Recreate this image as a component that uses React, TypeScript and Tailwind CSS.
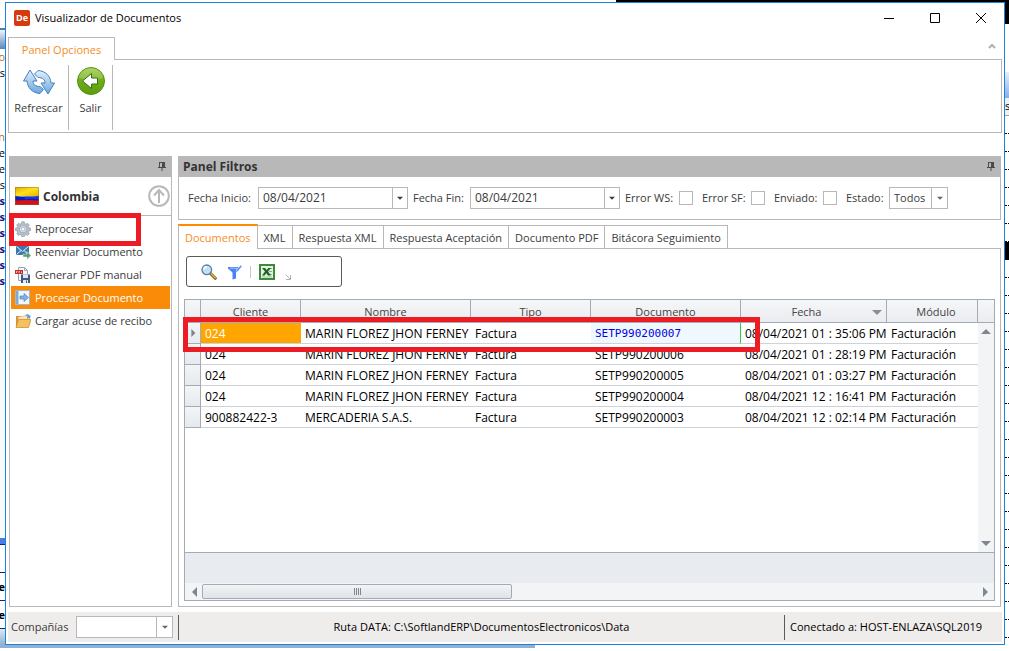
import type { ReactNode } from "react";

interface DocRow {
  cliente: string;
  nombre: string;
  tipo: string;
  documento: string;
  fecha: string;
  modulo: string;
}

const MARIN = "MARIN FLOREZ JHON FERNEY";

const ROWS: DocRow[] = [
  { cliente: "024", nombre: MARIN, tipo: "Factura", documento: "SETP990200007", fecha: "08/04/2021 01 : 35:06 PM", modulo: "Facturación" },
  { cliente: "024", nombre: MARIN, tipo: "Factura", documento: "SETP990200006", fecha: "08/04/2021 01 : 28:19 PM", modulo: "Facturación" },
  { cliente: "024", nombre: MARIN, tipo: "Factura", documento: "SETP990200005", fecha: "08/04/2021 01 : 03:27 PM", modulo: "Facturación" },
  { cliente: "024", nombre: MARIN, tipo: "Factura", documento: "SETP990200004", fecha: "08/04/2021 12 : 16:41 PM", modulo: "Facturación" },
  { cliente: "900882422-3", nombre: "MERCADERIA S.A.S.", tipo: "Factura", documento: "SETP990200003", fecha: "08/04/2021 12 : 02:14 PM", modulo: "Facturación" },
];

const TABS = ["Documentos", "XML", "Respuesta XML", "Respuesta Aceptación", "Documento PDF", "Bitácora Seguimiento"];

/* ---------- icons ---------- */

function Triangle({ dir, className }: { dir: "up" | "down" | "left" | "right"; className?: string }) {
  const d = { up: "M0 7L5 2l5 5z", down: "M0 3l5 5 5-5z", left: "M8 0L3 5l5 5z", right: "M3 0l5 5-5 5z" }[dir];
  return (
    <svg viewBox="0 0 10 10" className={className ?? "size-2.5"} fill="currentColor" aria-hidden="true">
      <path d={d} />
    </svg>
  );
}

function RefreshIcon() {
  return (
    <svg viewBox="0 0 32 26" className="h-[26px] w-8" aria-hidden="true">
      <defs>
        <linearGradient id="refresh" x1="0" y1="0" x2="0" y2="1">
          <stop offset="0" stopColor="#e3f1fc" />
          <stop offset="1" stopColor="#6aa6de" />
        </linearGradient>
      </defs>
      <g fill="url(#refresh)" stroke="#4580b8" strokeWidth="1" strokeLinejoin="round">
        <path d="M7 1L0.5 12H4C4.500 18.500 9 24 17 24.500L20.500 20.500L17 17.500C12.500 17.500 10 15.500 10 12H14Z" />
        <path d="M25 25L31.500 14H28C27.500 7.500 23 2 15 1.500L11.500 5L15 8.500C19.500 8.500 22 10.500 22 14H18Z" />
      </g>
    </svg>
  );
}

function ExitIcon() {
  return (
    <svg viewBox="0 0 28 28" className="size-7" aria-hidden="true">
      <defs>
        <linearGradient id="exit" x1="0" y1="0" x2="0" y2="1">
          <stop offset="0" stopColor="#9dcb3f" />
          <stop offset="0.5" stopColor="#6dac1a" />
          <stop offset="1" stopColor="#5a9f0a" />
        </linearGradient>
      </defs>
      <circle cx="14" cy="14" r="13.500" fill="url(#exit)" stroke="#55901a" />
      <path d="M2 11a12 10 0 0 1 24 0q-12 4-24 0z" fill="#fff" opacity="0.18" />
      <path d="M5.500 14L14.500 6.500V11H20.500V17H14.500V21.500Z" fill="#fff" stroke="#3c6e10" />
    </svg>
  );
}

function PinIcon() {
  return (
    <svg viewBox="0 0 8 9" className="h-[9px] w-2" fill="#4a4a4a" aria-hidden="true">
      <path d="M1 0h6v5h1v1H4.500v3h-1V6H0V5h1zM2 1v4h2V1z" fillRule="evenodd" />
    </svg>
  );
}

function FlagIcon() {
  return (
    <svg viewBox="0 0 24 18" className="h-[18px] w-6" aria-hidden="true">
      <defs>
        <linearGradient id="flag" x1="0" y1="0" x2="1" y2="1">
          <stop offset="0" stopColor="#e0a800" />
          <stop offset="0.5" stopColor="#ffe11a" />
          <stop offset="1" stopColor="#e9b400" />
        </linearGradient>
      </defs>
      <path d="M0 0h24v9H0z" fill="url(#flag)" />
      <path d="M0 9q12 1 24 0v5H0z" fill="#0b1fae" />
      <path d="M0 13.500q12-1 24 0V18H0z" fill="#d3121c" />
      <path d="M10 9.500h14v3q-8-1.500-14 0z" fill="#2443dd" opacity="0.7" />
      <path d="M.5.500h23v17H.5z" fill="none" stroke="#8a6a2a" opacity="0.45" />
    </svg>
  );
}

function GearIcon() {
  return (
    <svg viewBox="0 0 16 16" className="size-4" aria-hidden="true">
      <g fill="#b5bfca" stroke="#8492a1" strokeWidth="0.6">
        <path d="M6.700.800h2.600l.4 1.900 1.200.5 1.600-1 1.800 1.800-1 1.600.5 1.200 1.900.4v2.300l-1.900.4-.5 1.200 1 1.600-1.800 1.800-1.600-1-1.200.5-.4 1.500H6.700l-.4-1.500-1.200-.5-1.600 1-1.800-1.800 1-1.600-.5-1.200L.4 9.500V7.200L2.200 6.800l.5-1.200-1-1.600 1.800-1.800 1.600 1 1.200-.5z" />
        <circle cx="8" cy="8.200" r="3.600" fill="#e4e9ee" />
        <circle cx="8" cy="8.200" r="1.800" fill="#fff" />
      </g>
    </svg>
  );
}

function MailIcon() {
  return (
    <svg viewBox="0 0 16 16" className="size-4" aria-hidden="true">
      <path d="M1 2h13v9H1z" fill="#3b78ad" />
      <path d="M1.500 2.500l6 5 6-5M1.500 10.500L6 6.500M13.500 10.500L9 6.500" fill="none" stroke="#e6f1fa" />
      <path d="M8 10h4V7.500l4 4-4 4V13H8z" fill="#5d9c78" stroke="#e8f3ec" strokeWidth="0.5" />
    </svg>
  );
}

function PdfIcon() {
  return (
    <svg viewBox="0 0 16 16" className="size-4" aria-hidden="true">
      <path d="M3.500.500h6l3 3v10h-9z" fill="#f7f9fc" stroke="#9aa5b5" />
      <path d="M9.500.500v3h3" fill="none" stroke="#9aa5b5" />
      <path d="M0 3h8v4H0z" fill="#cc2b24" />
      <path d="M1.500 6V4.500h1M4 6V4.500h1M6.500 6V4.500" fill="none" stroke="#fff" strokeWidth="0.7" />
      <path d="M6 7.500h9V16H6z" fill="#44597f" />
      <path d="M8 7.500h5V11H8zM8 13h5v3H8z" fill="#dfe8f4" />
      <path d="M11 13.500h1V16h-1z" fill="#44597f" />
    </svg>
  );
}

function ProcessIcon() {
  return (
    <svg viewBox="0 0 16 16" className="size-4" aria-hidden="true">
      <path d="M.5.500h14v14H.5z" fill="#f2f6fa" stroke="#9db9d3" />
      <path d="M1 1h2.500v13H1z" fill="#7eaad6" />
      <path d="M5 6h4V3.500L13.500 7.500 9 11.500V9H5z" fill="#7fb2e2" stroke="#4f88bd" strokeWidth="0.700" />
    </svg>
  );
}

function FolderIcon() {
  return (
    <svg viewBox="0 0 16 16" className="size-4" aria-hidden="true">
      <path d="M1 3h5l1 1.500h6V14H1z" fill="#d99433" />
      <path d="M3 4l9-1.500 1 7H3z" fill="#f8e6b8" stroke="#d1a552" strokeWidth="0.500" />
      <path d="M3.500 6.500H16L13.500 14.500H1z" fill="#f5c060" stroke="#c98629" strokeWidth="0.700" />
      <path d="M10 2q3.500-2 5 1l1-.2L14.500 6l-2.500-1.500 1-.3q-.8-1.500-3-2.200z" fill="#5f9bd2" />
    </svg>
  );
}

function SearchIcon() {
  return (
    <svg viewBox="0 0 16 16" className="size-4" aria-hidden="true">
      <path d="M9.500 9.500l4.800 4.800" stroke="#6b5410" strokeWidth="3" strokeLinecap="round" />
      <path d="M10 9.700l4.300 4.300" stroke="#e3b93c" strokeWidth="1.500" strokeLinecap="round" />
      <circle cx="5.800" cy="5.800" r="4.800" fill="#bfe0f5" stroke="#5d7f9d" strokeWidth="1.300" />
      <path d="M3 5.500a3 3 0 0 1 3-2.700" fill="none" stroke="#fff" strokeWidth="1.400" />
    </svg>
  );
}

function FilterIcon() {
  return (
    <svg viewBox="0 0 16 16" className="size-4" aria-hidden="true">
      <path d="M1 3h12v1.500L9 8.500V14.500L5.500 15.500V8.500L1 4.500z" fill="#4a82f5" />
      <path d="M3 4.200h7" stroke="#a9c7fb" />
      <path d="M9 6.500l4.500-5.500 1.700 1.300-4.500 5.500z" fill="#5c92f8" stroke="#fff" strokeWidth="0.600" />
    </svg>
  );
}

function ExcelIcon() {
  return (
    <svg viewBox="0 0 16 16" className="size-4" aria-hidden="true">
      <path d="M1 1h14v14H1z" fill="#e3f1df" stroke="#3c8a3a" strokeWidth="2" />
      <path d="M9 4.500h4M10 7.500h3M9 10.500h4" stroke="#7db57c" />
      <path d="M3 4h3l1.500 2L9.500 4H12L9 7.500l3 4H9L7.300 9.200 5.500 11.500H3l3-4z" fill="#1f5f2a" />
      <path d="M3 13h10" stroke="#9ccb98" />
    </svg>
  );
}

/* ---------- left panel ---------- */

function SideItem({ icon, label, active, marked }: { icon: ReactNode; label: string; active?: boolean; marked?: boolean }) {
  return (
    <li className="relative">
      <button
        type="button"
        className={`flex h-[23px] w-full items-center gap-1 pl-1 text-left ${active ? "bg-[#f98b09] text-white" : "text-[#3b3b3b]"}`}
      >
        {icon}
        {label}
      </button>
      {marked && <span className="pointer-events-none absolute -top-1 -left-0.5 h-[33px] w-[132px] border-[5px] border-[#ed1c24]" />}
    </li>
  );
}

function SidePanel() {
  return (
    <aside className="flex w-[163px] shrink-0 flex-col border border-t-0 border-[#b8b8b8]">
      <div className="-mx-px flex h-[21px] items-center justify-end bg-[#b8b8b8] pr-1.5">
        <PinIcon />
      </div>
      <div className="flex h-[39px] items-center border-b border-[#b8b8b8] pr-px pl-[5px]">
        <FlagIcon />
        <h2 className="ml-1 flex-1 pt-0.5 text-[12px] font-bold text-[#333]">Colombia</h2>
        <button type="button" aria-label="Contraer">
          <svg viewBox="0 0 22 22" className="size-[22px]" fill="none" stroke="#b8b8b8" strokeWidth="2">
            <circle cx="11" cy="11" r="9.800" />
            <path d="M11 18V5M6 10.500L11 5l5 5.500" />
          </svg>
        </button>
      </div>
      <ul className="px-px pt-px">
        <SideItem icon={<GearIcon />} label="Reprocesar" marked />
        <SideItem icon={<MailIcon />} label="Reenviar Documento" />
        <SideItem icon={<PdfIcon />} label="Generar PDF manual" />
        <SideItem icon={<ProcessIcon />} label="Procesar Documento" active />
        <SideItem icon={<FolderIcon />} label="Cargar acuse de recibo" />
      </ul>
    </aside>
  );
}

/* ---------- filters ---------- */

function DateField({ id, label, labelWidth }: { id: string; label: string; labelWidth: string }) {
  return (
    <div className="flex items-center gap-1">
      <label htmlFor={id} className={labelWidth}>
        {label}
      </label>
      <div className="flex h-[22px] w-[150px] border border-[#b8b8b8]">
        <input id={id} type="text" defaultValue="08/04/2021" className="w-0 flex-1 px-1 text-[12px] outline-none" />
        <button type="button" aria-label={`Calendario ${label}`} className="grid w-[15px] place-items-center border-l border-[#b8b8b8]">
          <Triangle dir="down" className="size-1.5" />
        </button>
      </div>
    </div>
  );
}

function CheckField({ id, label, labelWidth }: { id: string; label: string; labelWidth: string }) {
  return (
    <div className="flex items-center gap-1">
      <label htmlFor={id} className={labelWidth}>
        {label}
      </label>
      <input id={id} type="checkbox" className="size-3.5 appearance-none border border-[#b8b8b8] bg-white" />
    </div>
  );
}

interface SelectProps {
  id: string;
  label: string;
  labelWidth: string;
  options: string[];
  size: string;
}

function SelectField({ id, label, labelWidth, options, size }: SelectProps) {
  return (
    <div className="flex items-center gap-1">
      <label htmlFor={id} className={labelWidth}>
        {label}
      </label>
      <div className={`relative h-[22px] border border-[#b8b8b8] bg-white ${size}`}>
        <select id={id} className="h-full w-full appearance-none pl-1 outline-none">
          {options.map((o) => (
            <option key={o}>{o}</option>
          ))}
        </select>
        <span className="pointer-events-none absolute inset-y-0 right-0 grid w-4 place-items-center border-l border-[#b8b8b8] text-[#666]">
          <Triangle dir="down" className="size-1.5" />
        </span>
      </div>
    </div>
  );
}

function FilterPanel() {
  return (
    <section>
      <div className="flex h-[21px] items-center justify-between bg-[#b8b8b8] pr-1.5 pl-[5px]">
        <h2 className="text-[12px] font-bold text-[#333]">Panel Filtros</h2>
        <PinIcon />
      </div>
      <form className="flex h-[43px] items-center gap-[5px] border border-t-0 border-[#b8b8b8] pl-[9px]">
        <DateField id="inicio" label="Fecha Inicio:" labelWidth="w-[66px]" />
        <DateField id="fin" label="Fecha Fin:" labelWidth="w-[53px]" />
        <div className="flex items-center gap-[9px]">
          <CheckField id="error-ws" label="Error WS:" labelWidth="w-[50px]" />
          <CheckField id="error-sf" label="Error SF:" labelWidth="w-[45px]" />
          <CheckField id="enviado" label="Enviado:" labelWidth="w-[45px]" />
          <SelectField id="estado" label="Estado:" labelWidth="w-[39px]" options={["Todos", "Pendiente"]} size="w-[59px]" />
        </div>
      </form>
    </section>
  );
}

/* ---------- grid ---------- */

const headCell = "border-r border-b border-[#a4abb6] bg-linear-to-b from-[#f6f7f8] to-[#e9ecf0] pt-0.5 pb-0 font-normal text-[#444]";
const bodyCell = "overflow-hidden border-b border-[#cdd1d9] px-1 pt-0.5 whitespace-nowrap";

function DocumentGrid() {
  return (
    <div className="relative flex flex-1 flex-col border border-[#a4abb6]">
      <div className="flex flex-1">
        <div className="flex-1 overflow-hidden">
          <table className="w-full table-fixed border-separate border-spacing-0">
            <colgroup>
              <col className="w-4" />
              <col className="w-[100px]" />
              <col className="w-[170px]" />
              <col className="w-[120px]" />
              <col className="w-[150px]" />
              <col className="w-[146px]" />
              <col />
            </colgroup>
            <thead>
              <tr className="h-[23px]">
                <th className={headCell} />
                <th className={headCell}>Cliente</th>
                <th className={headCell}>Nombre</th>
                <th className={headCell}>Tipo</th>
                <th className={headCell}>Documento</th>
                <th className={headCell}>
                  <span className="flex items-center pr-1">
                    <span className="flex-1">Fecha</span>
                    <Triangle dir="down" className="size-2.5 text-[#8a8d96]" />
                  </span>
                </th>
                <th className={`${headCell} pl-2`}>Módulo</th>
              </tr>
            </thead>
            <tbody>
              {ROWS.map((r, i) => (
                <tr key={r.documento} className="h-[21px] text-[12px] text-black">
                  <td className="border-r border-b border-[#a4abb6] bg-linear-to-b from-[#f3f5f7] to-[#e6e9ee]">
                    {i === 0 && <Triangle dir="right" className="mx-auto size-2 text-[#7f828c]" />}
                  </td>
                  <td className={`${bodyCell} ${i === 0 ? "bg-[#ffa500] text-white" : ""}`}>{r.cliente}</td>
                  <td className={bodyCell}>{r.nombre}</td>
                  <td className={bodyCell}>{r.tipo}</td>
                  {i === 0 ? (
                    <td className={`${bodyCell} border-r border-r-[#32cd32] bg-[#f0f8ff] font-['DejaVu_Sans_Mono',monospace] text-[11px] text-[#0000e6]`}>
                      {r.documento}
                    </td>
                  ) : (
                    <td className={bodyCell}>{r.documento}</td>
                  )}
                  <td className={bodyCell}>{r.fecha}</td>
                  <td className={bodyCell}>{r.modulo}</td>
                </tr>
              ))}
            </tbody>
          </table>
        </div>
        <div className="flex w-4 flex-col">
          <div className="h-[23px] border-b border-[#a4abb6] bg-linear-to-b from-[#f6f7f8] to-[#e9ecf0]" />
          <div className="flex flex-1 flex-col items-center justify-between bg-[#f3f4f6] py-1 text-[#808591]">
            <Triangle dir="up" />
            <Triangle dir="down" />
          </div>
        </div>
      </div>
      <div className="h-[31px] border-t border-[#a4abb6] bg-[#e8ebf0]" />
      <div className="flex h-[17px] items-center bg-[#f3f4f6] px-1 text-[#808591]">
        <Triangle dir="left" />
        <div className="ml-[3px] flex h-[15px] w-[310px] items-center justify-center gap-px rounded-xs border border-[#a4abb6] bg-linear-to-b from-[#f3f5f6] to-[#dfe3e7]">
          <span className="h-[7px] w-px bg-[#808591]" />
          <span className="h-[7px] w-px bg-[#808591]" />
          <span className="h-[7px] w-px bg-[#808591]" />
          <span className="h-[7px] w-px bg-[#808591]" />
        </div>
        <Triangle dir="right" className="ml-auto size-2.5" />
      </div>
      <span className="pointer-events-none absolute top-[17px] -left-0.5 h-[35px] w-[577px] border-[5px] border-[#ed1c24]" />
    </div>
  );
}

function Toolbar() {
  return (
    <div className="flex h-[31px] w-[156px] items-center rounded-[3px] border border-[#5a5a5a] pl-3.5">
      <button type="button" aria-label="Buscar">
        <SearchIcon />
      </button>
      <button type="button" aria-label="Filtrar" className="ml-2.5">
        <FilterIcon />
      </button>
      <span className="mr-2 ml-[7px] h-3 w-px bg-[#c8c8c8]" />
      <button type="button" aria-label="Exportar a Excel">
        <ExcelIcon />
      </button>
      <svg viewBox="0 0 6 6" className="mt-2.5 ml-2.5 size-1.5" fill="none" stroke="#b0b0b0" aria-hidden="true">
        <path d="M.5.500l5 5M5.500 1v4.500H1" />
      </svg>
    </div>
  );
}

function Workspace() {
  return (
    <main className="flex min-w-0 flex-1 flex-col">
      <FilterPanel />
      <div className="mt-1 flex h-[25px] items-end" role="tablist">
        {TABS.map((t, i) => (
          <button
            key={t}
            type="button"
            role="tab"
            aria-selected={i === 0}
            className={
              i === 0
                ? "h-[25px] border-t-2 border-r border-l border-t-[#ff8c00] border-r-[#b8b8b8] border-l-[#b8b8b8] px-1.5 pt-px text-[#f78c1e]"
                : "h-6 border-t border-r border-b border-[#b8b8b8] px-1.5 pt-px"
            }
          >
            {t}
          </button>
        ))}
        <span className="flex-1 border-b border-[#b8b8b8]" />
      </div>
      <div className="flex flex-1 flex-col gap-3 border border-t-0 border-[#b8b8b8] p-[5px] pt-[7px]">
        <div className="pl-0.5">
          <Toolbar />
        </div>
        <DocumentGrid />
      </div>
    </main>
  );
}

/* ---------- window frame ---------- */

function TitleBar() {
  return (
    <header className="flex h-[34px] items-center pr-[17px] pb-[5px] pl-2">
      <span className="grid size-4 place-items-center rounded-xs bg-[#d63a0f] text-[9px] font-bold text-white">De</span>
      <h1 className="ml-[5px] flex-1 text-black">Visualizador de Documentos</h1>
      <div className="flex gap-[34px] text-black">
        <button type="button" aria-label="Minimizar">
          <svg viewBox="0 0 12 12" className="size-3" stroke="currentColor">
            <path d="M1 6.500h10" />
          </svg>
        </button>
        <button type="button" aria-label="Maximizar">
          <svg viewBox="0 0 12 12" className="size-3" fill="none" stroke="currentColor">
            <path d="M1.500 1.500h9v9h-9z" />
          </svg>
        </button>
        <button type="button" aria-label="Cerrar">
          <svg viewBox="0 0 12 12" className="size-3" stroke="currentColor">
            <path d="M1 1l10 10M11 1L1 11" />
          </svg>
        </button>
      </div>
    </header>
  );
}

function Ribbon() {
  return (
    <nav className="px-0.5">
      <div className="flex h-[23px] items-stretch">
        <button type="button" className="w-[107px] border-t border-r border-l border-[#b8b8b8] pt-0.5 text-[#f78c1e]">
          Panel Opciones
        </button>
        <div className="flex flex-1 items-start justify-end border-b border-[#b8b8b8] pt-1.5 pr-1.5">
          <svg viewBox="0 0 8 6" className="h-1.5 w-2" fill="none" stroke="#b0b0b0" strokeWidth="2" aria-hidden="true">
            <path d="M1 5l3-3 3 3" />
          </svg>
        </div>
      </div>
      <div className="flex h-[73px] border border-t-0 border-[#b8b8b8] pt-[5px] pb-0.5">
        <button type="button" className="flex w-[60px] flex-col items-center gap-[5px] border-r border-[#b8b8b8] pt-1">
          <RefreshIcon />
          Refrescar
        </button>
        <button type="button" className="flex w-11 flex-col items-center gap-[5px] border-r border-[#b8b8b8] pt-0.5">
          <ExitIcon />
          Salir
        </button>
      </div>
    </nav>
  );
}

function StatusBar() {
  return (
    <footer className="mx-0.5 mt-[5px] mb-0.5 flex h-[30px] items-center bg-[#efecec] pr-[9px] pl-[3px]">
      <SelectField id="companias" label="Compañías" labelWidth="w-[61px]" options={[""]} size="w-[97px]" />
      <p className="ml-[5px] flex h-[25px] flex-1 items-center justify-center border-x border-[#5a5a5a] text-black">
        Ruta DATA: C:\SoftlandERP\DocumentosElectronicos\Data
      </p>
      <p className="w-[208px] pl-[5px] text-black">Conectado a: HOST-ENLAZA\SQL2019</p>
    </footer>
  );
}

/* ---------- application left showing behind the window ---------- */

const BEHIND_LEFT: { text?: string; className: string }[] = [
  { className: "h-[26px]" },
  { className: "h-[21px] border-t-2 border-[#4a7fb5] bg-linear-to-b from-[#f0f4fa] to-[#5c87ba]" },
  { text: "o", className: "h-4 text-[#c26a14]" },
  { text: "s", className: "h-4" },
  { className: "h-12" },
  { text: "n", className: "h-4 text-[#c26a14]" },
  { text: "le", className: "h-4" },
  { text: "Re", className: "h-4" },
  { text: "s", className: "h-4" },
  { text: "s", className: "h-4 font-bold text-[#10107a]" },
  { text: "s", className: "h-4 font-bold text-[#10107a]" },
  { text: "s", className: "h-4 font-bold text-[#10107a]" },
  { text: "s", className: "h-4 font-bold text-[#10107a]" },
  { text: "s", className: "h-4 font-bold text-[#10107a]" },
  { text: "s", className: "h-4 font-bold text-[#10107a]" },
  { className: "flex-1 bg-[#fafafa]" },
  { className: "h-[7px] border-b border-[#0a2a86] bg-[#4a7de6]" },
  { className: "h-7 border-b border-[#0a2a86]" },
  { text: "te", className: "h-7 border-b border-[#0a2a86] pt-1.5 font-bold" },
  { text: "e", className: "h-7 border-b border-[#0a2a86] pt-1.5 font-bold" },
  { className: "h-4 bg-linear-to-b from-[#dfe8f2] to-[#8fb0d2]" },
];

function BehindLeft() {
  return (
    <div className="flex w-[5px] flex-col overflow-hidden text-black" aria-hidden="true">
      {BEHIND_LEFT.map((b, i) => (
        <span key={i} className={`flex shrink-0 justify-end ${b.className}`}>
          {b.text}
        </span>
      ))}
    </div>
  );
}

function BehindRight() {
  return (
    <div className="flex w-1 flex-col overflow-hidden text-black" aria-hidden="true">
      <span className="h-[22px] bg-black" />
      <span className="h-12" />
      <span className="h-[26px] bg-linear-to-b from-[#e6effc] to-[#8aaee8]" />
      <span className="h-[18px] border-b border-[#a0a0a0] bg-[#f0f0f0]">s</span>
      {Array.from({ length: 29 }, (_, i) => (
        <span key={i} className={`h-[18px] ${i === 7 ? "bg-black" : "border-b border-dotted border-black"}`} />
      ))}
    </div>
  );
}

export default function App() {
  return (
    <div className="flex min-h-screen flex-col bg-white font-['Open_Sans','Noto_Sans',sans-serif] text-[11px] leading-4 text-[#3b3b3b]">
      <div className="flex h-0.5 justify-end">
        <span className="w-[39%] bg-black" />
      </div>
      <div className="flex flex-1">
        <BehindLeft />
        <div className="flex min-w-0 flex-1 flex-col border border-[#1c84d8] bg-white">
          <TitleBar />
          <Ribbon />
          <div className="mt-[23px] flex flex-1 gap-1.5 px-[3px]">
            <SidePanel />
            <Workspace />
          </div>
          <StatusBar />
        </div>
        <BehindRight />
      </div>
      <div className="flex h-1.5 flex-col">
        <div className="h-[3px] w-[53%] bg-[#8fb0d2]" />
      </div>
    </div>
  );
}
